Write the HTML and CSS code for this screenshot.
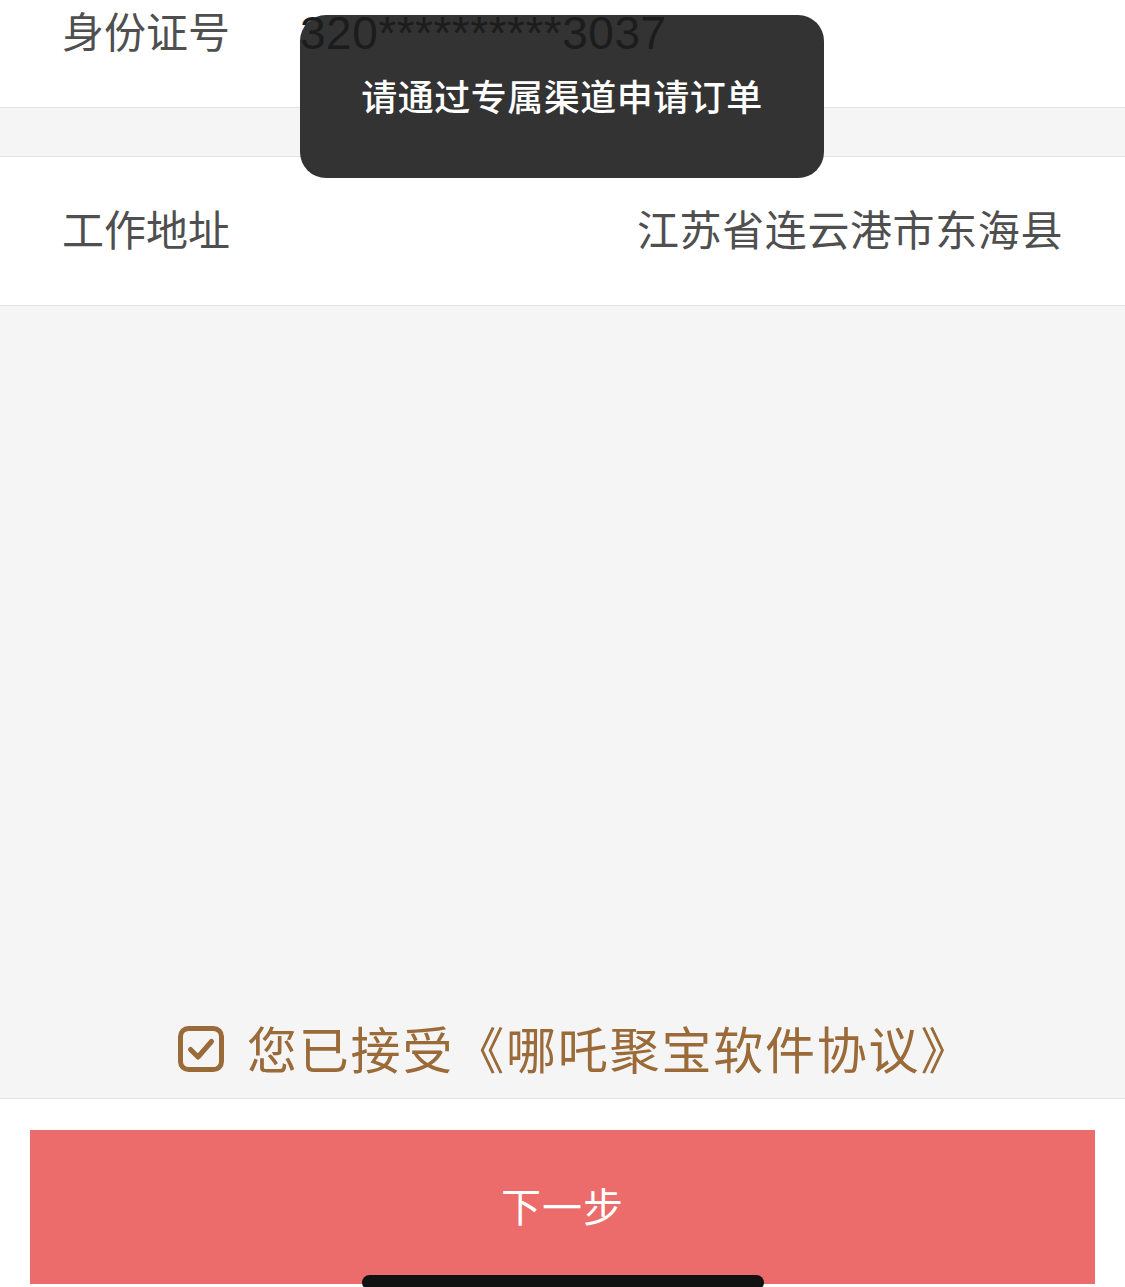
FILE: index.html
```html
<!DOCTYPE html>
<html lang="zh-CN">
<head>
<meta charset="utf-8">
<title>信息确认</title>
<link rel="stylesheet" href="styles.css">
</head>
<body>
<div class="page">
  <div class="row row-top">
    <span class="label">身份证号</span>
    <span class="idnum">320**********3037</span>
  </div>
  <div class="gap"></div>
  <div class="row row-mid">
    <span class="label">工作地址</span>
    <span class="value">江苏省连云港市东海县</span>
  </div>
  <div class="fill">
    <div class="agree">
      <span class="checkbox">
        <svg viewBox="0 0 46 46" width="46" height="46">
          <rect x="2.5" y="2.5" width="41" height="41" rx="8" ry="8" fill="none" stroke="#9a6a38" stroke-width="5"/>
          <path d="M12.5 23.5 L20 31 L33.5 15.5" fill="none" stroke="#9a6a38" stroke-width="5" stroke-linecap="round" stroke-linejoin="round"/>
        </svg>
      </span>
      <span class="agree-text">您已接受《哪吒聚宝软件协议》</span>
    </div>
  </div>
  <div class="footer">
    <div class="btn">下一步</div>
  </div>
  <div class="toast">请通过专属渠道申请订单</div>
  <div class="home-bar"></div>
</div>
</body>
</html>
```

FILE: styles.css
```css
html, body {
  margin: 0;
  padding: 0;
  background: #ffffff;
}

.page {
  position: relative;
  width: 1125px;
  height: 1287px;
  overflow: hidden;
  display: flex;
  flex-direction: column;
  font-family: "Noto Sans CJK SC", "Noto Sans", sans-serif;
}

.row {
  display: flex;
  background: #ffffff;
  border-bottom: 1px solid #e3e3e3;
  padding: 0 62px;
  flex-shrink: 0;
}

.row-top {
  height: 107px;
  align-items: flex-start;
}

.row-top .label {
  margin-top: 8px;
  line-height: 44px;
}

.row-mid {
  height: 149px;
  box-sizing: border-box;
  padding-bottom: 6px;
  align-items: center;
  justify-content: space-between;
}

.label {
  font-size: 42px;
  line-height: 44px;
  color: #4f4f4f;
  width: 238px;
  flex-shrink: 0;
}

.value {
  font-size: 42px;
  line-height: 44px;
  color: #4f4f4f;
  letter-spacing: 0.6px;
}

.idnum {
  position: relative;
  z-index: 3;
  margin-top: 10px;
  font-family: "Liberation Sans", Arial, sans-serif;
  font-size: 46px;
  line-height: 46px;
  color: #1c1c1c;
  letter-spacing: 0.5px;
}

.gap {
  height: 48px;
  background: #f5f5f5;
  border-bottom: 1px solid #e3e3e3;
  flex-shrink: 0;
}

.fill {
  flex: 1;
  background: #f5f5f5;
  display: flex;
  flex-direction: column;
  justify-content: flex-end;
  align-items: flex-start;
  padding: 0 0 21px 178px;
}

.agree {
  display: flex;
  align-items: center;
  height: 60px;
  gap: 23px;
}

.checkbox {
  display: flex;
  width: 46px;
  height: 46px;
  margin-top: 4px;
}

.agree-text {
  font-size: 50px;
  line-height: 60px;
  color: #9a6a38;
  letter-spacing: 1.8px;
}

.footer {
  border-top: 1px solid #e3e3e3;
  background: #ffffff;
  padding: 31px 30px 3px;
  flex-shrink: 0;
}

.btn {
  height: 154px;
  box-sizing: border-box;
  padding-bottom: 4px;
  background: #ec6c6b;
  color: #ffffff;
  font-size: 40px;
  display: flex;
  align-items: center;
  justify-content: center;
  letter-spacing: 1px;
}

.toast {
  position: absolute;
  left: 300px;
  top: 15px;
  width: 524px;
  height: 163px;
  box-sizing: border-box;
  padding-bottom: 4px;
  border-radius: 26px;
  background: #333333;
  color: #ffffff;
  font-size: 36px;
  font-weight: 500;
  display: flex;
  align-items: center;
  justify-content: center;
  z-index: 2;
  letter-spacing: 0.5px;
}

.home-bar {
  position: absolute;
  left: 362px;
  bottom: -3px;
  width: 402px;
  height: 15px;
  border-radius: 8px;
  background: #111111;
  z-index: 4;
}
```
